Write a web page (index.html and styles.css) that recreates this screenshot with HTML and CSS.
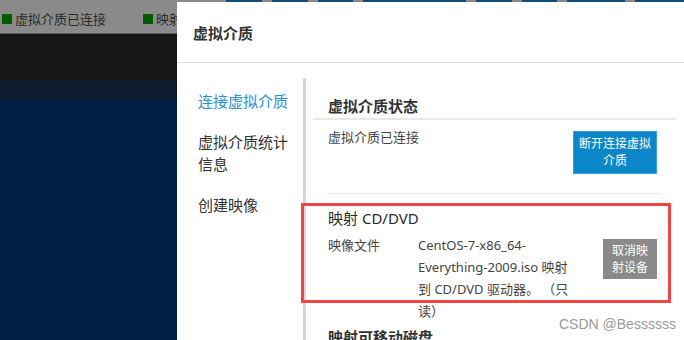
FILE: index.html
```html
<!DOCTYPE html>
<html lang="zh-CN">
<head>
<meta charset="utf-8">
<title>虚拟介质</title>
<link rel="stylesheet" href="styles.css">
</head>
<body>
<div class="page">
  <div class="topbar">
    <div class="tabs">
      <span class="seg s1"></span><span class="seg s2"></span><span class="seg s3"></span><span class="seg s4"></span><span class="seg s5"></span><span class="seg s6"></span><span class="seg s7"></span><span class="seg s8"></span>
    </div>
    <div class="status">
      <span class="stat"><i class="dot"></i>虚拟介质已连接</span>
      <span class="stat"><i class="dot"></i>映射</span>
    </div>
  </div>
  <div class="band-black"></div>
  <div class="band-dark"></div>
  <div class="band-navy"></div>

  <div class="modal">
    <div class="modal-header">虚拟介质</div>
    <div class="modal-body">
      <nav class="nav">
        <div class="nav-item active">连接虚拟介质</div>
        <div class="nav-item">虚拟介质统计<br>信息</div>
        <div class="nav-item">创建映像</div>
      </nav>
      <section class="content">
        <h2 class="head head-line">虚拟介质状态</h2>
        <div class="row row-status">
          <span class="label-wide">虚拟介质已连接</span>
          <button class="btn btn-blue">断开连接虚拟<br>介质</button>
        </div>
        <h2 class="head head-plain">映射 CD/DVD</h2>
        <div class="row row-map">
          <span class="label">映像文件</span>
          <span class="value">CentOS-7-x86_64-<br>Everything-2009.iso 映射<br>到 CD/DVD 驱动器。 （只<br>读）</span>
          <button class="btn btn-grey">取消映<br>射设备</button>
        </div>
        <h2 class="head head-next">映射可移动磁盘</h2>
      </section>
    </div>
  </div>

  <div class="highlight"></div>
  <div class="watermark">CSDN @Bessssss</div>
</div>
</body>
</html>
```

FILE: styles.css
```css
* { box-sizing: border-box; }
html, body { margin: 0; padding: 0; }
body {
  width: 684px;
  height: 340px;
  overflow: hidden;
  font-family: "Noto Sans", "Noto Sans CJK SC", sans-serif;
  color: #333;
}
.page {
  position: relative;
  width: 684px;
  height: 340px;
  display: flex;
  flex-direction: column;
  overflow: hidden;
}
.topbar {
  height: 34px;
  background: #8a8a8a;
  border-bottom: 1px solid #5a5a5a;
}
.tabs {
  display: flex;
  height: 2px;
  padding-left: 226px;
  gap: 10px;
}
.seg { height: 2px; background: #0f4c78; }
.s1 { width: 37px; }
.s2 { width: 36px; }
.s3 { width: 36px; }
.s4 { width: 105px; }
.s5 { width: 37px; }
.s6 { width: 36px; }
.s7 { width: 59px; }
.s8 { width: 50px; }
.status {
  display: flex;
  gap: 37px;
  padding: 9px 0 0 2px;
  font-size: 13px;
  line-height: 16px;
  color: #2a2a2a;
}
.stat { display: flex; align-items: center; gap: 3px; }
.dot {
  width: 10px;
  height: 10px;
  background: #005c00;
  display: inline-block;
}
.band-black { height: 46px; background: #161616; }
.band-dark { height: 20px; background: #0c1b2e; }
.band-navy { flex: 1; background: #001f45; }

.modal {
  position: absolute;
  left: 177px;
  top: 2px;
  width: 540px;
  height: 380px;
  background: #fff;
}
.modal-header {
  height: 61px;
  padding-left: 16px;
  display: flex;
  align-items: center;
  font-size: 15px;
  font-weight: 600;
  color: #333;
  border-bottom: 1px solid #dedede;
}
.modal-body { display: flex; }
.nav {
  width: 126px;
  padding: 27px 0 0 21px;
  display: flex;
  flex-direction: column;
  gap: 19px;
}
.nav-item {
  font-size: 15px;
  line-height: 22px;
  color: #333;
}
.nav-item.active { color: #2b8fd8; }
.content {
  margin-top: 15px;
  border-left: 3px solid #d6d6d6;
  padding: 17px 0 0 22px;
  width: 359px;
  min-height: 300px;
}
.head {
  margin: 0;
  font-size: 15px;
  line-height: 22px;
  color: #333;
}
.head-line {
  font-weight: 700;
  margin: 0 -14px 0 -15px;
  padding: 0 14px 1px 15px;
  border-bottom: 2px solid #e8e8e8;
}
.head-plain { font-weight: 400; margin-top: 13px; color: #2a2a2a; }
.head-next { font-weight: 700; margin-top: 4px; }
.row { display: flex; align-items: flex-start; }
.row-status {
  justify-content: space-between;
  padding: 7px 0 19px;
  border-bottom: 1px solid #e8e8e8;
}
.label-wide { font-size: 13px; line-height: 20px; color: #444; }
.row-map { margin-top: 5px; }
.label { width: 90px; flex: none; font-size: 13px; line-height: 22px; color: #444; }
.value { flex: 1; font-size: 13px; line-height: 22px; color: #444; }
.btn {
  border: 0;
  color: #fff;
  font-family: inherit;
  font-size: 12px;
  line-height: 17px;
  text-align: center;
  flex: none;
  margin-right: 5px;
}
.btn-blue {
  width: 84px;
  margin-top: 4px;
  padding: 3px 4px 4px;
  background: #0b86c8;
  border: 1px solid #3aa0d8;
}
.btn-grey {
  width: 54px;
  margin-top: 5px;
  padding: 3px 2px;
  background: #8a8a8a;
}
.highlight {
  position: absolute;
  left: 301px;
  top: 203px;
  width: 370px;
  height: 100px;
  border: 3px solid #f24444;
}
.watermark {
  position: absolute;
  left: 559px;
  top: 315px;
  font-family: "Liberation Sans", sans-serif;
  font-size: 14px;
  line-height: 18px;
  color: #9a9a9a;
}
```
